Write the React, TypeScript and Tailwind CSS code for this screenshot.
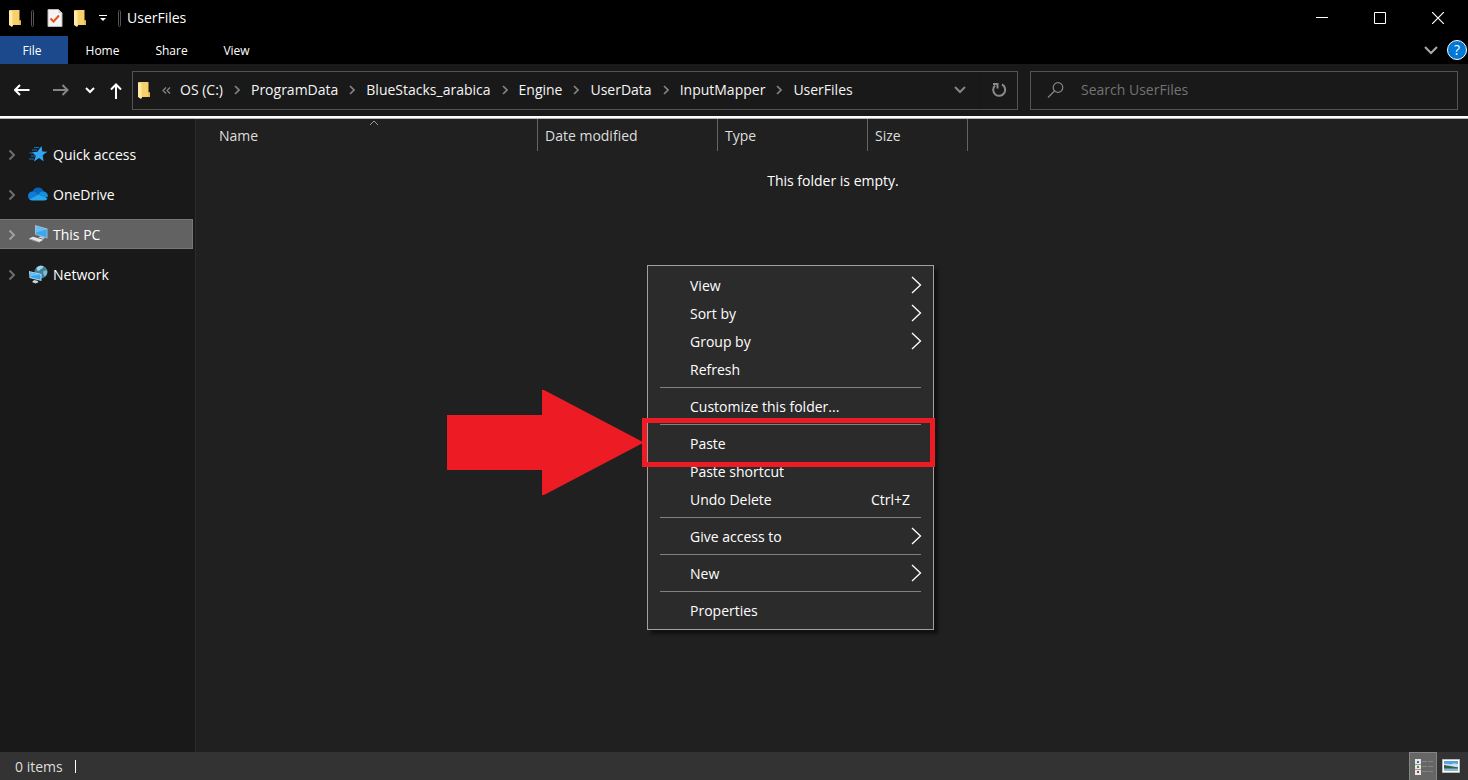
import type { ReactNode } from "react";

const crumbs = [
  "OS (C:)",
  "ProgramData",
  "BlueStacks_arabica",
  "Engine",
  "UserData",
  "InputMapper",
  "UserFiles",
];

type MenuEntry = { label: string; submenu?: boolean; shortcut?: string };

const menuGroups: MenuEntry[][] = [
  [
    { label: "View", submenu: true },
    { label: "Sort by", submenu: true },
    { label: "Group by", submenu: true },
    { label: "Refresh" },
  ],
  [{ label: "Customize this folder..." }],
  [
    { label: "Paste" },
    { label: "Paste shortcut" },
    { label: "Undo Delete", shortcut: "Ctrl+Z" },
  ],
  [{ label: "Give access to", submenu: true }],
  [{ label: "New", submenu: true }],
  [{ label: "Properties" }],
];

function FolderIcon() {
  return (
    <svg width="14" height="18" viewBox="0 0 14 18" className="shrink-0">
      <path d="M2 1h9.500v10.500h1.500V16H3z" fill="#f7cf6b" />
      <path d="M11.500 11.500H13V16h-2z" fill="#e8b84a" />
      <path d="M1 1l3 1.500V18l-3-2z" fill="#ffe9a6" />
      <path d="M4 2.500V18l1-1.500V3z" fill="#fbdc84" />
    </svg>
  );
}

function PropertiesIcon() {
  return (
    <svg width="16" height="18" viewBox="0 0 16 18" className="shrink-0">
      <path d="M1 0.500h10.500l3.500 3.500v13.500H1z" fill="#f4f4f4" stroke="#b9b9b9" />
      <path d="M11.500 0.500V4H15z" fill="#cfcfcf" />
      <path d="M3.500 9.500l3 3L12 6.500" fill="none" stroke="#e8541a" strokeWidth="2" />
    </svg>
  );
}

function Chevron({ className }: { className?: string }) {
  return (
    <svg width="8" height="12" viewBox="0 0 8 12" className={className}>
      <path d="M1.500 1.500L6 6l-4.500 4.500" fill="none" stroke="currentColor" strokeWidth="2" />
    </svg>
  );
}

function QuickAccessIcon() {
  return (
    <svg width="20" height="18" viewBox="0 0 20 18">
      <path
        d="M13.500 1l.8 5.500 5 .3-4.600 3.500.8 6-4.500-3.300L6 16.500l1.800-5.800L4 7.300l5.300-.6z"
        fill="#2ea8f5"
      />
      <path d="M6 2.500h5M4 5h5M1.500 8h4M3 11h4M1 14h5" stroke="#1a74b8" strokeWidth="1" />
    </svg>
  );
}

function OneDriveIcon() {
  return (
    <svg width="20" height="14" viewBox="0 0 20 14">
      <path d="M4.500 5C5 2 7.500.5 10 .5c2.800 0 5 1.600 5.700 4.200L10 9z" fill="#0763b9" />
      <path d="M4.500 4.500C2 4.500 0 6.500 0 9c0 1.500.6 2.700 1.600 3.500L11 8 7 5C6.200 4.600 5.300 4.500 4.500 4.500z" fill="#0f7bd8" />
      <path d="M15 4.500c-2 0-3.300.9-4.500 2.500L17 11l3-1.500c0-3-2.300-5-5-5z" fill="#1490df" />
      <path d="M1.500 12.300L11 7.500l8.500 4c-.6 1.200-1.700 2-3.200 2H4.500c-1.200 0-2.200-.4-3-1.200z" fill="#28a8ea" />
    </svg>
  );
}

function ThisPcIcon() {
  return (
    <svg width="20" height="18" viewBox="0 0 20 18">
      <path d="M7 0l12.500 3.500v10L7 9.500z" fill="#9dbccd" />
      <path d="M8 1.500l10.700 3v7.800L8 9z" fill="#3aa9f2" />
      <path d="M8 1.500l10.700 3L8 7.500z" fill="#63bffa" />
      <path d="M12 11.200l5 1.600-1.500 1.200-5-1.500z" fill="#cfd6da" />
      <path d="M1 13.500l4-1.800 10.500 3-4 2.300z" fill="#e2e6e9" />
      <path d="M1 13.500l10.500 3.500v.8L1 14.300z" fill="#a9b1b6" />
    </svg>
  );
}

function NetworkIcon() {
  return (
    <svg width="20" height="19" viewBox="0 0 20 19">
      <circle cx="13" cy="7" r="6.500" fill="#3f8199" />
      <path d="M8.500 3c2-2.500 5-3 7-1.500-.5 2-2.500 2-3.500 3.500s-3 1-3.500-2z" fill="#a8d3e2" />
      <path d="M15.500 6l3.500-.8c.8 2.800-.5 5.300-2 6.300-1-1-2.500-3.500-1.500-5.500z" fill="#83bcd1" />
      <path d="M1 6l12.500 3v7L1.500 13z" fill="#b9d7e6" />
      <path d="M2 7.200l10.500 2.600v5L2.500 12.200z" fill="#36a5ef" />
      <path d="M2 7.200l10.500 2.600-10.200 1.400z" fill="#63bffa" />
      <path d="M6 15l3.500.8 1 1.400-3 1.200-3.500-1.500z" fill="#cfd5d9" />
    </svg>
  );
}

const places: { label: string; icon: ReactNode; selected?: boolean }[] = [
  { label: "Quick access", icon: <QuickAccessIcon /> },
  { label: "OneDrive", icon: <OneDriveIcon /> },
  { label: "This PC", icon: <ThisPcIcon />, selected: true },
  { label: "Network", icon: <NetworkIcon /> },
];

function TitleBar() {
  return (
    <header className="flex h-9 items-center bg-black pr-px">
      <div className="flex flex-1 items-center pl-2">
        <FolderIcon />
        <span className="ml-[9px] h-[17px] w-[3px] rounded-sm border border-[#555]" />
        <button aria-label="Properties" className="ml-[13px]">
          <PropertiesIcon />
        </button>
        <button aria-label="New folder" className="ml-[10px]">
          <FolderIcon />
        </button>
        <button aria-label="Customize Quick Access Toolbar" className="ml-3">
          <svg width="8" height="8" viewBox="0 0 8 8">
            <path d="M0 1.500h8" stroke="#fff" />
            <path d="M1 4h6L4 7z" fill="#fff" />
          </svg>
        </button>
        <span className="ml-[11px] h-[17px] w-[3px] rounded-sm border border-[#555]" />
        <h1 className="ml-[6px] text-sm text-white">UserFiles</h1>
      </div>
      <button aria-label="Minimize" className="flex h-8 w-[58px] items-center justify-center">
        <svg width="12" height="12" viewBox="0 0 12 12">
          <path d="M0 5.500h12" stroke="#fff" />
        </svg>
      </button>
      <button aria-label="Maximize" className="flex h-8 w-[58px] items-center justify-center">
        <svg width="12" height="12" viewBox="0 0 12 12">
          <path d="M0.500 0.500h11v11h-11z" fill="none" stroke="#fff" />
        </svg>
      </button>
      <button aria-label="Close" className="flex h-8 w-[58px] items-center justify-center">
        <svg width="12" height="12" viewBox="0 0 12 12">
          <path d="M0 0l12 12M12 0L0 12" stroke="#fff" strokeWidth="1.200" />
        </svg>
      </button>
    </header>
  );
}

function Ribbon() {
  return (
    <nav className="flex h-7 items-center bg-black text-xs text-white">
      <button className="h-full w-[68px] bg-[#1c488c] pt-0.5 pr-1">File</button>
      <button className="h-full w-[69px] pt-0.5">Home</button>
      <button className="h-full w-[69px] pt-0.5">Share</button>
      <button className="h-full w-[61px] pt-0.5">View</button>
      <div className="ml-auto flex items-center gap-[9px] pr-px">
        <button aria-label="Minimize the Ribbon">
          <svg width="14" height="9" viewBox="0 0 14 9">
            <path d="M1 1l6 6 6-6" fill="none" stroke="#aaa" strokeWidth="2" />
          </svg>
        </button>
        <button
          aria-label="Help"
          className="flex size-5 items-center justify-center rounded-full border border-white bg-[#0078d7] text-sm"
        >
          ?
        </button>
      </div>
    </nav>
  );
}

function AddressBar() {
  return (
    <div className="flex h-[52px] items-center bg-[#191919] pr-[10px]">
      <div className="flex w-[132px] items-center pl-[14px] text-white">
        <button aria-label="Back">
          <svg width="16" height="12" viewBox="0 0 16 12">
            <path d="M15.500 6H1M6 1L1 6l5 5" fill="none" stroke="currentColor" strokeWidth="2" />
          </svg>
        </button>
        <button aria-label="Forward" className="ml-[23px] text-[#858585]">
          <svg width="16" height="12" viewBox="0 0 16 12">
            <path d="M0 6h14.500M9.500 1l5 5-5 5" fill="none" stroke="currentColor" strokeWidth="2" />
          </svg>
        </button>
        <button aria-label="Recent locations" className="ml-4">
          <svg width="10" height="7" viewBox="0 0 10 7">
            <path d="M1 1l4 4 4-4" fill="none" stroke="currentColor" strokeWidth="2" />
          </svg>
        </button>
        <button aria-label="Up" className="ml-[15px] pt-0.5">
          <svg width="12" height="16" viewBox="0 0 12 16">
            <path d="M6 16V1.500M1 6.500l5-5 5 5" fill="none" stroke="currentColor" strokeWidth="2" />
          </svg>
        </button>
      </div>
      <div className="flex h-[39px] flex-1 items-center border border-[#535353] pl-1 text-sm text-[#f5f5f5]">
        <FolderIcon />
        <svg width="9" height="7" viewBox="0 0 9 7" className="mr-[9px] ml-[11px]">
          <path d="M4 0.500l-3 3 3 3M8 0.500l-3 3 3 3" fill="none" stroke="#8a8a8a" strokeWidth="1.200" />
        </svg>
        <ol className="flex items-center whitespace-nowrap">
          {crumbs.map((crumb, i) => (
            <li key={crumb} className="flex items-center">
              {i > 0 && (
                <span className="flex w-7 justify-center text-[#858585]">
                  <svg width="6" height="10" viewBox="0 0 6 10">
                    <path d="M1 1l4 4-4 4" fill="none" stroke="currentColor" strokeWidth="1.600" />
                  </svg>
                </span>
              )}
              <button>{crumb}</button>
            </li>
          ))}
        </ol>
        <button aria-label="Previous locations" className="ml-auto flex h-full w-[38px] items-center justify-center">
          <svg width="12" height="8" viewBox="0 0 12 8">
            <path d="M1 1l5 5 5-5" fill="none" stroke="#858585" strokeWidth="2" />
          </svg>
        </button>
        <button
          aria-label="Refresh"
          className="flex h-full w-[38px] items-center justify-center border-l border-[#151515]"
        >
          <svg width="16" height="16" viewBox="0 0 16 16">
            <path d="M11 2.500A6 6 0 1 1 4 3.500" fill="none" stroke="#8a8a8a" strokeWidth="2" />
            <path d="M2 2h4.500v4.500" fill="none" stroke="#8a8a8a" strokeWidth="2" />
          </svg>
        </button>
      </div>
      <label className="ml-3 flex h-[39px] w-[428px] items-center border border-[#535353] pl-4">
        <svg width="18" height="17" viewBox="0 0 18 17">
          <circle cx="11" cy="5.500" r="4.800" fill="none" stroke="#858585" strokeWidth="1.200" />
          <path d="M7.500 9L1 15.500" stroke="#858585" strokeWidth="1.200" />
        </svg>
        <input
          type="text"
          aria-label="Search UserFiles"
          placeholder="Search UserFiles"
          className="ml-4 min-w-0 flex-1 bg-transparent text-sm text-white outline-none placeholder:text-[#737373]"
        />
      </label>
    </div>
  );
}

function Sidebar() {
  return (
    <aside className="w-[196px] shrink-0 border-r border-[#2b2b2b] bg-[#191919] pt-5">
      <ul className="flex flex-col gap-[10px]">
        {places.map((place) => (
          <li key={place.label} className="pr-0.5">
            <button
              className={`flex h-[30px] w-full items-center pt-0.5 pl-2 text-left text-sm text-white ${
                place.selected ? "border border-l-0 border-[#777] bg-[#626262]" : ""
              }`}
            >
              <Chevron className={place.selected ? "text-[#a0a0a0]" : "text-[#6e6e6e]"} />
              <span className="mr-[5px] ml-3 flex w-5 justify-center pb-0.5">{place.icon}</span>
              {place.label}
            </button>
          </li>
        ))}
      </ul>
    </aside>
  );
}

function FileList() {
  return (
    <main className="flex-1 bg-[#202020] text-sm">
      <table className="ml-[15px] w-[757px] table-fixed border-separate border-spacing-0 text-left text-[#dedede]">
        <thead>
          <tr className="h-8">
            <th className="relative w-[327px] border-r border-[#636363] pt-0.5 pl-2 font-normal">
              <svg
                width="10"
                height="6"
                viewBox="0 0 10 6"
                className="absolute top-px left-1/2 -translate-x-1/2"
              >
                <path d="M1 5l4-4 4 4" fill="none" stroke="#999" />
              </svg>
              Name
            </th>
            <th className="w-[180px] border-r border-[#636363] pt-0.5 pl-[7px] font-normal">Date modified</th>
            <th className="w-[150px] border-r border-[#636363] pt-0.5 pl-[7px] font-normal">Type</th>
            <th className="w-[100px] border-r border-[#636363] pt-0.5 pl-[7px] font-normal">Size</th>
          </tr>
        </thead>
      </table>
      <p className="mt-5 pl-0.5 text-center text-white">This folder is empty.</p>
    </main>
  );
}

function ContextMenu() {
  return (
    <div className="absolute top-[146px] left-[647px] w-[287px] border border-[#a0a0a0] bg-[#2b2b2b] py-[5px] text-sm text-white shadow-[4px_4px_3px_rgba(0,0,0,0.5)]">
      {menuGroups.map((group, i) => (
        <div key={group[0].label}>
          {i > 0 && <hr className="mx-3 my-1 border-[#808080]" />}
          {group.map((entry) => (
            <button key={entry.label} className="flex h-7 w-full items-center pr-[11px] pl-[42px] text-left">
              <span className="pt-0.5">{entry.label}</span>
              {entry.shortcut && <span className="mr-3 ml-auto pt-0.5">{entry.shortcut}</span>}
              {entry.submenu && (
                <svg width="11" height="18" viewBox="0 0 11 18" className="ml-auto">
                  <path d="M1 1l8.500 8L1 17" fill="none" stroke="#fff" strokeWidth="1.300" />
                </svg>
              )}
            </button>
          ))}
        </div>
      ))}
    </div>
  );
}

// red arrow and frame pointing at the Paste entry
function PasteCallout() {
  return (
    <div className="pointer-events-none absolute top-[271px] left-[447px] flex items-center">
      <svg width="195" height="105" viewBox="0 0 195 105">
        <path d="M0 25h95V0h2l98 51.500v2L97 105h-2V80H0z" fill="#ed1c24" />
      </svg>
      <div className="h-[49px] w-[293px] border-5 border-[#ed1c24]" />
    </div>
  );
}

function StatusBar() {
  return (
    <footer className="flex h-7 items-center bg-[#333] pl-[15px] text-sm text-[#dedede]">
      <span className="pt-0.5">0 items</span>
      <span className="ml-3 h-[13px] w-px bg-white" />
      <div className="ml-auto flex h-full items-center">
        <button
          aria-label="Details view"
          className="flex h-full w-7 items-center justify-center border border-b-0 border-[#858585] bg-[#666] pl-0.5"
        >
          <svg width="18" height="16" viewBox="0 0 18 16">
            <path d="M0 0h6v16H0z" fill="#e8e8e8" />
            <path d="M0 5.500h6M0 10.500h6" stroke="#999" />
            <path d="M2 2h2v2H2z" fill="#2f7a9c" />
            <path d="M2 7h2v2H2z" fill="#5c8a26" />
            <path d="M2 12h2v2H2z" fill="#b03a26" />
            <path d="M7 2.500h5M13 2.500h5M7 7.500h5M13 7.500h5M7 12.500h5M13 12.500h5" stroke="#858585" />
          </svg>
        </button>
        <button aria-label="Large icons view" className="flex h-full w-[31px] items-center justify-center pr-[3px]">
          <svg width="18" height="14" viewBox="0 0 18 14">
            <path d="M0.500 0.500h17v13H0.500z" fill="#fff" stroke="#bbb" />
            <path d="M2 2h14v10H2z" fill="#5b9fe0" />
            <path d="M2 5c3-1 5 1 8 0s4 0 6 0v3H2z" fill="#c7e2f5" />
            <path d="M2 6l6 1 8 1.500V10H2z" fill="#2c6147" />
            <path d="M2 9.500h14V12H2z" fill="#8db8d0" />
          </svg>
        </button>
      </div>
    </footer>
  );
}

export default function App() {
  return (
    <div className="flex min-h-screen flex-col bg-[#202020] font-['Open_Sans',sans-serif]">
      <TitleBar />
      <Ribbon />
      <AddressBar />
      <div className="h-0.5 bg-white" />
      <div className="relative flex flex-1 border-t border-[#b4b4b4]">
        <Sidebar />
        <FileList />
        <ContextMenu />
        <PasteCallout />
      </div>
      <StatusBar />
    </div>
  );
}
